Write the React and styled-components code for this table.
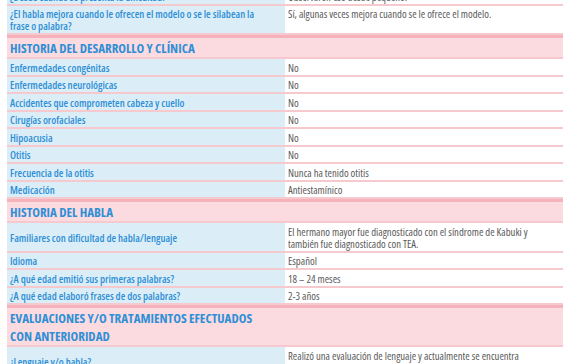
import React from "react"
import styled, { createGlobalStyle } from "styled-components"

const sections = [
  {
    rows: [
      ["¿Desde cuándo se presenta la dificultad?", "Observaron eso desde pequeño."],
      [
        "¿El habla mejora cuando le ofrecen el modelo o se le silabean la frase o palabra?",
        "Sí, algunas veces mejora cuando se le ofrece el modelo.",
      ],
    ],
  },
  {
    title: "HISTORIA DEL DESARROLLO Y CLÍNICA",
    rows: [
      ["Enfermedades congénitas", "No"],
      ["Enfermedades neurológicas", "No"],
      ["Accidentes que comprometen cabeza y cuello", "No"],
      ["Cirugías orofaciales", "No"],
      ["Hipoacusia", "No"],
      ["Otitis", "No"],
      ["Frecuencia de la otitis", "Nunca ha tenido otitis"],
      ["Medicación", "Antiestamínico"],
    ],
  },
  {
    title: "HISTORIA DEL HABLA",
    rows: [
      [
        "Familiares con dificultad de habla/lenguaje",
        "El hermano mayor fue diagnosticado con el síndrome de Kabuki y también fue diagnosticado con TEA.",
      ],
      ["Idioma", "Español"],
      ["¿A qué edad emitió sus primeras palabras?", "18 – 24 meses"],
      ["¿A qué edad elaboró frases de dos palabras?", "2-3 años"],
    ],
  },
  {
    title: "EVALUACIONES Y/O TRATAMIENTOS EFECTUADOS CON ANTERIORIDAD",
    rows: [
      [
        "¿Lenguaje y/o habla?",
        "Realizó una evaluación de lenguaje y actualmente se encuentra recibiendo terapia de lenguaje.",
      ],
    ],
  },
]

export default function App() {
  return (
    <>
      <GlobalStyle />
      <Page>
        <Table>
          {sections.map((section, i) => (
            <React.Fragment key={i}>
              {section.title && (
                <SectionHeader>
                  <SectionTitle>{section.title}</SectionTitle>
                </SectionHeader>
              )}
              {section.rows.map(([label, value], j) => (
                <Row key={j}>
                  <Label>{label}</Label>
                  <Value>{value}</Value>
                </Row>
              ))}
            </React.Fragment>
          ))}
        </Table>
      </Page>
    </>
  )
}

const GlobalStyle = createGlobalStyle`
  body {
    margin: 0;
    background: #ffffff;
    font-family: "Open Sans", "Lato", sans-serif;
    font-stretch: 80%;
    overflow: hidden;
  }
`

const Page = styled.div`
  padding: 0 7px;
  margin-top: -12px;
`

const Table = styled.div`
  width: 556px;
  display: flex;
  flex-direction: column;
`

const Row = styled.div`
  display: grid;
  grid-template-columns: 278px 278px;
  border-bottom: 2px solid #f6c9ce;
`

const Label = styled.div`
  background: #dbeef7;
  color: #2f8fd6;
  font-weight: 650;
  font-size: 10.6px;
  line-height: 12px;
  padding: 2.5px 14px 1px 3px;
  display: flex;
  align-items: center;
`

const Value = styled.div`
  background: #ffffff;
  color: #5a5a5a;
  font-size: 10.7px;
  line-height: 12px;
  padding: 2.5px 20px 1px 3px;
`

const SectionHeader = styled.div`
  background: #fcdbe0;
  border-top: 3px solid #f5b2ba;
  border-bottom: 2px solid #f6c9ce;
  padding: 1px 3px 0 3px;
`

const SectionTitle = styled.div`
  color: #2f8fd6;
  font-stretch: 82%;
  font-weight: 700;
  font-size: 13px;
  line-height: 18px;
  max-width: 262px;
`
